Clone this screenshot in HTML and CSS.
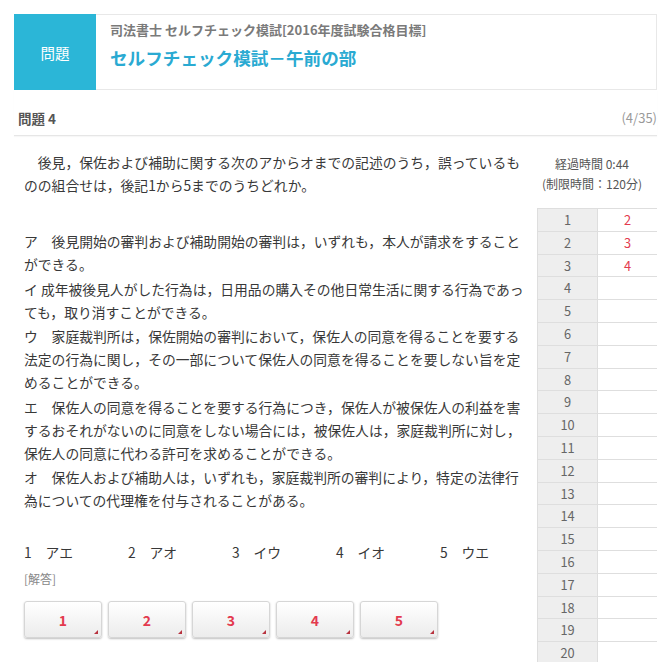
FILE: index.html
```html
<!DOCTYPE html>
<html>
<head>
  <meta charset="utf-8">
  <title>セルフチェック模試－午前の部</title>
  <link rel="stylesheet" href="styles.css">
</head>
<body>
  <div class="container">
    <div class="header">
      <div class="badge">問題</div>
      <div class="titles">
        <div class="subtitle">司法書士 セルフチェック模試[2016年度試験合格目標]</div>
        <h1>セルフチェック模試－午前の部</h1>
      </div>
    </div>

    <div class="qhead">
      <span class="qnum">問題 4</span>
      <span class="qcount">(4/35)</span>
    </div>

    <div class="main">
      <div class="question">
        <p class="lead">後見，保佐および補助に関する次のアからオまでの記述のうち，誤っているものの組合せは，後記1から5までのうちどれか。</p>

        <div class="items">
          <p>ア　後見開始の審判および補助開始の審判は，いずれも，本人が請求をすることができる。</p>
          <p>イ 成年被後見人がした行為は，日用品の購入その他日常生活に関する行為であっても，取り消すことができる。</p>
          <p>ウ　家庭裁判所は，保佐開始の審判において，保佐人の同意を得ることを要する法定の行為に関し，その一部について保佐人の同意を得ることを要しない旨を定めることができる。</p>
          <p>エ　保佐人の同意を得ることを要する行為につき，保佐人が被保佐人の利益を害するおそれがないのに同意をしない場合には，被保佐人は，家庭裁判所に対し，保佐人の同意に代わる許可を求めることができる。</p>
          <p>オ　保佐人および補助人は，いずれも，家庭裁判所の審判により，特定の法律行為についての代理権を付与されることがある。</p>
        </div>

        <div class="choices">
          <span class="choice">1　アエ</span>
          <span class="choice">2　アオ</span>
          <span class="choice">3　イウ</span>
          <span class="choice">4　イオ</span>
          <span class="choice">5　ウエ</span>
        </div>

        <div class="answer-label">[解答]</div>
        <div class="answers">
          <button class="ans-btn">1</button>
          <button class="ans-btn">2</button>
          <button class="ans-btn">3</button>
          <button class="ans-btn">4</button>
          <button class="ans-btn">5</button>
        </div>
      </div>

      <div class="side">
        <div class="timer">
          <div>経過時間 0:44</div>
          <div>(制限時間：120分)</div>
        </div>
        <div class="sheet">
          <div class="no">1</div><div class="mark">2</div>
          <div class="no">2</div><div class="mark">3</div>
          <div class="no">3</div><div class="mark">4</div>
          <div class="no">4</div><div class="mark"></div>
          <div class="no">5</div><div class="mark"></div>
          <div class="no">6</div><div class="mark"></div>
          <div class="no">7</div><div class="mark"></div>
          <div class="no">8</div><div class="mark"></div>
          <div class="no">9</div><div class="mark"></div>
          <div class="no">10</div><div class="mark"></div>
          <div class="no">11</div><div class="mark"></div>
          <div class="no">12</div><div class="mark"></div>
          <div class="no">13</div><div class="mark"></div>
          <div class="no">14</div><div class="mark"></div>
          <div class="no">15</div><div class="mark"></div>
          <div class="no">16</div><div class="mark"></div>
          <div class="no">17</div><div class="mark"></div>
          <div class="no">18</div><div class="mark"></div>
          <div class="no">19</div><div class="mark"></div>
          <div class="no">20</div><div class="mark"></div>
        </div>
      </div>
    </div>
  </div>
</body>
</html>
```

FILE: styles.css
```css
html, body {
  overflow: hidden;
}
body {
  margin: 0;
  background-color: white;
  font-family: "Noto Sans CJK JP", sans-serif;
  color: #383838;
}
.container {
  width: 643px;
  padding: 14px 0 0 14px;
}
.header {
  display: flex;
  height: 76px;
  border: 1px solid #e8e8e8;
  border-left: none;
  box-sizing: border-box;
}
.badge {
  width: 82px;
  margin: -1px 0;
  background-color: #2bb6d7;
  color: white;
  font-size: 14.5px;
  display: flex;
  align-items: center;
  justify-content: center;
}
.titles {
  padding: 6px 14px 0;
}
.subtitle {
  font-size: 13px;
  line-height: 18px;
  font-weight: bold;
  color: #7a7a7a;
}
h1 {
  margin: 7px 0 0;
  font-size: 17.6px;
  line-height: 24px;
  font-weight: bold;
  color: #2aaad2;
}
.qhead {
  display: flex;
  justify-content: space-between;
  padding: 18px 0 7px 4px;
  line-height: 20px;
  border-bottom: 1px solid #e6e6e6;
  box-shadow: 0 1px 1px rgba(0,0,0,0.03);
}
.qnum {
  font-size: 13.5px;
  font-weight: bold;
  color: #555;
}
.qcount {
  font-size: 13px;
  color: #999;
}
.main {
  display: flex;
  padding-left: 10px;
}
.question {
  width: 505px;
  font-size: 13.8px;
}
.question p {
  margin: 0;
  line-height: 23px;
}
.lead {
  padding-top: 15px;
  text-indent: 1em;
}
.items {
  margin-top: 33px;
}
.items p {
  margin-bottom: 1.5px;
}
.choices {
  display: flex;
  margin-top: 29px;
  line-height: 23px;
}
.choice {
  width: 104px;
  flex-shrink: 0;
}
.answer-label {
  margin-top: 6px;
  font-size: 12px;
  line-height: 18px;
  color: #888;
}
.answers {
  display: flex;
  gap: 6px;
  margin-top: 13px;
}
.ans-btn {
  position: relative;
  width: 78px;
  height: 37px;
  padding: 0;
  border: 1px solid #d6d6d6;
  border-radius: 3px;
  background: linear-gradient(#ffffff, #ececec);
  box-shadow: 0 1px 2px rgba(0,0,0,0.25);
  font-family: "Noto Sans CJK JP", sans-serif;
  font-size: 14px;
  font-weight: bold;
  color: #e33a4e;
  cursor: pointer;
}
.ans-btn::after {
  content: "";
  position: absolute;
  right: 3px;
  bottom: 3px;
  border-style: solid;
  border-width: 0 0 4px 4px;
  border-color: transparent transparent #b8333f transparent;
}
.side {
  width: 120px;
  margin-left: 8px;
}
.timer {
  padding-top: 18px;
  font-size: 12px;
  line-height: 20px;
  color: #555;
  text-align: center;
  margin-left: -10px;
}
.sheet {
  display: grid;
  grid-template-columns: 59px 59px;
  grid-auto-rows: 21.8px;
  gap: 1px;
  margin-top: 14px;
  padding: 1px;
  background-color: #dedede;
  font-size: 12.8px;
  line-height: 21.8px;
  text-align: center;
}
.no {
  background-color: #eeeeee;
  color: #666;
}
.mark {
  background-color: white;
  color: #e33a4e;
}
```
